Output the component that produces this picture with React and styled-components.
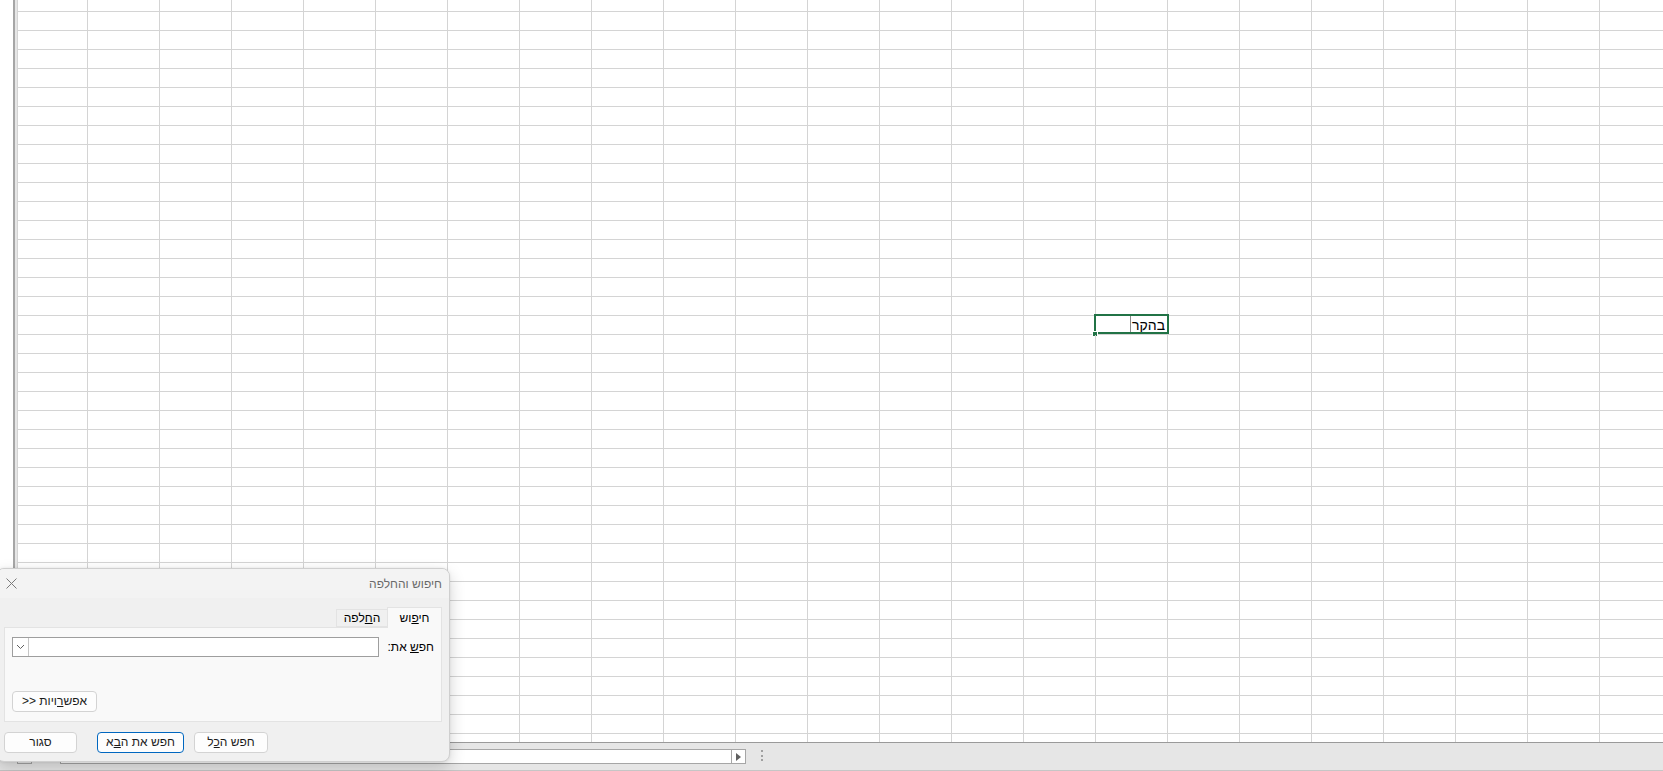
import React from "react";
import styled, { createGlobalStyle } from "styled-components";

const GlobalStyle = createGlobalStyle`
  html, body { margin: 0; padding: 0; background: #ffffff; }
  body { font-family: "Liberation Sans", "DejaVu Sans", Arial, sans-serif; overflow: hidden; }
  * { box-sizing: border-box; }
`;

const COLS = 23;
const ROWS = 40;
const SEL_ROW = 17;
const SEL_COL = 15;

const Page = styled.div`
  position: relative;
  width: 1663px;
  height: 771px;
  overflow: hidden;
  display: flex;
  flex-direction: column;
  background: #fff;
`;

const SheetArea = styled.div`
  display: flex;
  height: 742px;
  overflow: hidden;
`;

const LeftMargin = styled.div`
  width: 13px;
  flex: none;
  background: #fff;
`;

const SplitBar = styled.div`
  width: 4px;
  flex: none;
  background: #e6e6e6;
  border-left: 2px solid #a6a6a6;
`;

const Grid = styled.div`
  flex: 1;
  display: grid;
  grid-template-columns: 70px repeat(${COLS - 1}, 72px);
  grid-template-rows: 12px repeat(${ROWS - 1}, 19px);
  border-left: 1px solid #d4d4d4;
  overflow: hidden;
`;

const Cell = styled.div`
  position: relative;
  border-right: 1px solid #d4d4d4;
  border-bottom: 1px solid #d4d4d4;
  display: flex;
  align-items: flex-end;
  justify-content: flex-end;
  padding: 0 2px 2px 0;
  font-size: 14px;
  line-height: 14px;
  color: #000;
`;

const SelectionFrame = styled.div`
  position: absolute;
  left: -2px;
  top: -2px;
  right: -2px;
  bottom: 0;
  border: 2px solid #217346;
  pointer-events: none;
`;

const FillHandle = styled.div`
  position: absolute;
  left: -4px;
  bottom: -3px;
  width: 6px;
  height: 6px;
  background: #217346;
  border: 1px solid #fff;
`;

const Caret = styled.span`
  width: 1px;
  height: 17px;
  margin-bottom: -1px;
  margin-right: 1px;
  background: #8a8a8a;
  align-self: flex-end;
`;

const CellText = styled.span`
  direction: rtl;
`;

const BottomBar = styled.div`
  height: 29px;
  flex: none;
  background: #e6e6e6;
  border-top: 1px solid #9a9a9a;
  border-bottom: 1px solid #c6c6c6;
  display: flex;
  align-items: flex-start;
  padding: 6px 0 0 17px;
`;

const SheetNavBox = styled.div`
  width: 15px;
  height: 15px;
  border: 1px solid #a6a6a6;
  background: #ececec;
  margin-right: 28px;
`;

const ScrollTrack = styled.div`
  width: 686px;
  height: 15px;
  background: #fff;
  border: 1px solid #a6a6a6;
  display: flex;
  justify-content: flex-end;
`;

const ScrollArrow = styled.div`
  width: 14px;
  height: 100%;
  border-left: 1px solid #a6a6a6;
  display: flex;
  align-items: center;
  justify-content: center;
`;

const Grip = styled.div`
  margin-left: 14px;
  width: 4px;
  height: 13px;
  display: flex;
  flex-direction: column;
  justify-content: space-between;
  align-items: center;
  padding: 1px 0;
  span {
    width: 2px;
    height: 2px;
    background: #a0a0a0;
  }
`;

/* Find & Replace dialog window */
const Dialog = styled.div`
  position: absolute;
  left: -4px;
  top: 568px;
  width: 454px;
  height: 194px;
  background: #f0f0f0;
  border: 1px solid #cfcfcf;
  border-radius: 8px;
  box-shadow: 0 6px 16px rgba(0, 0, 0, 0.18), 0 0 3px rgba(0, 0, 0, 0.08);
  overflow: hidden;
  display: flex;
  flex-direction: column;
  font-size: 12px;
  color: #1b1b1b;
  z-index: 5;
`;

const TitleBar = styled.div`
  height: 29px;
  flex: none;
  background: #f3f3f3;
  direction: rtl;
  display: flex;
  align-items: center;
  justify-content: space-between;
  padding: 0 7px 0 9px;
`;

const Title = styled.span`
  color: #6a6a6a;
  font-size: 12px;
`;

const CloseIcon = styled.svg`
  width: 11px;
  height: 11px;
  display: block;
`;

const Body = styled.div`
  direction: rtl;
  padding: 9px 7px 0 7px;
  display: flex;
  flex-direction: column;
`;

const TabRow = styled.div`
  height: 20px;
  display: flex;
  align-items: flex-end;
`;

const Tab = styled.div`
  height: ${(p) => (p.$active ? "21px" : "18px")};
  margin-bottom: ${(p) => (p.$active ? "-1px" : "0")};
  width: ${(p) => p.$width}px;
  background: ${(p) => (p.$active ? "#f9f9f9" : "#f0f0f0")};
  border: 1px solid #e3e3e3;
  border-bottom: ${(p) => (p.$active ? "none" : "1px solid #e3e3e3")};
  ${(p) => (p.$active ? "" : "border-right: none;")}
  position: relative;
  z-index: ${(p) => (p.$active ? 2 : 1)};
  display: flex;
  align-items: center;
  justify-content: center;
  padding-bottom: ${(p) => (p.$active ? "1px" : "0")};
  color: #000;
  font-size: 12px;
`;

const Panel = styled.div`
  height: 95px;
  background: #f9f9f9;
  border: 1px solid #e3e3e3;
  padding: 9px 7px 9px 7px;
  display: flex;
  flex-direction: column;
  justify-content: space-between;
`;

const FieldRow = styled.div`
  display: flex;
  align-items: center;
  height: 20px;
`;

const FieldLabel = styled.label`
  flex: none;
  margin-left: 9px;
  color: #000;
  font-size: 12px;
`;

const Combo = styled.div`
  flex: 1;
  height: 20px;
  background: #fff;
  border: 1px solid #9e9e9e;
  display: flex;
  justify-content: flex-end;
`;

const ComboButton = styled.div`
  width: 16px;
  height: 100%;
  border-right: 1px solid #c6c6c6;
  display: flex;
  align-items: center;
  justify-content: center;
`;

const Button = styled.button`
  height: 21px;
  width: ${(p) => p.$width}px;
  flex: none;
  background: #fdfdfd;
  border: 1px solid ${(p) => (p.$default ? "#0067c0" : "#d3d3d3")};
  border-radius: 4px;
  font-family: inherit;
  font-size: 12px;
  color: #1b1b1b;
  padding: 0;
  text-align: center;
  line-height: 19px;
  white-space: pre;
  margin-right: ${(p) => p.$gapAfter || 0}px;
`;

const OptionsButton = styled(Button)`
  align-self: flex-end;
`;

const Footer = styled.div`
  direction: ltr;
  display: flex;
  padding: 10px 0 0 7px;
`;

function Chevron() {
  return (
    <svg width="9" height="6" viewBox="0 0 9 6">
      <path d="M1 1 L4.5 4.5 L8 1" fill="none" stroke="#606060" strokeWidth="1" />
    </svg>
  );
}

function RightTriangle() {
  return (
    <svg width="5" height="8" viewBox="0 0 5 8">
      <path d="M0 0 L5 4 L0 8 Z" fill="#606060" />
    </svg>
  );
}

function SheetGrid() {
  const cells = [];
  for (let r = 0; r < ROWS; r++) {
    for (let c = 0; c < COLS; c++) {
      const selected = r === SEL_ROW && c === SEL_COL;
      cells.push(
        <Cell key={`${r}-${c}`}>
          {selected && (
            <>
              <Caret />
              <CellText>בהקר</CellText>
              <SelectionFrame />
              <FillHandle />
            </>
          )}
        </Cell>
      );
    }
  }
  return <Grid>{cells}</Grid>;
}

function FindReplaceDialog() {
  return (
    <Dialog>
      <TitleBar>
        <Title>חיפוש והחלפה</Title>
        <CloseIcon viewBox="0 0 11 11">
          <path d="M0.5 0.5 L10.5 10.5 M10.5 0.5 L0.5 10.5" stroke="#7a7a7a" strokeWidth="1" />
        </CloseIcon>
      </TitleBar>
      <Body>
        <TabRow>
          <Tab $active $width={55}>
            <span>
              חי<u>פ</u>וש
            </span>
          </Tab>
          <Tab $width={51}>
            <span>
              ה<u>ח</u>לפה
            </span>
          </Tab>
        </TabRow>
        <Panel>
          <FieldRow>
            <FieldLabel>
              חפ<u>ש</u> את:
            </FieldLabel>
            <Combo>
              <ComboButton>
                <Chevron />
              </ComboButton>
            </Combo>
          </FieldRow>
          <OptionsButton $width={85} dir="ltr">
            {">> "}
            <bdi dir="rtl">
              אפש<u>ר</u>ויות
            </bdi>
          </OptionsButton>
        </Panel>
      </Body>
      <Footer>
        <Button $width={73} $gapAfter={20} dir="rtl">
          סגור
        </Button>
        <Button $width={87} $gapAfter={10} $default dir="rtl">
          חפש את ה<u>ב</u>א
        </Button>
        <Button $width={74} dir="rtl">
          חפש ה<u>כ</u>ל
        </Button>
      </Footer>
    </Dialog>
  );
}

export default function App() {
  return (
    <>
      <GlobalStyle />
      <Page>
        <SheetArea>
          <LeftMargin />
          <SplitBar />
          <SheetGrid />
        </SheetArea>
        <BottomBar>
          <SheetNavBox />
          <ScrollTrack>
            <ScrollArrow>
              <RightTriangle />
            </ScrollArrow>
          </ScrollTrack>
          <Grip>
            <span />
            <span />
            <span />
          </Grip>
        </BottomBar>
        <FindReplaceDialog />
      </Page>
    </>
  );
}
